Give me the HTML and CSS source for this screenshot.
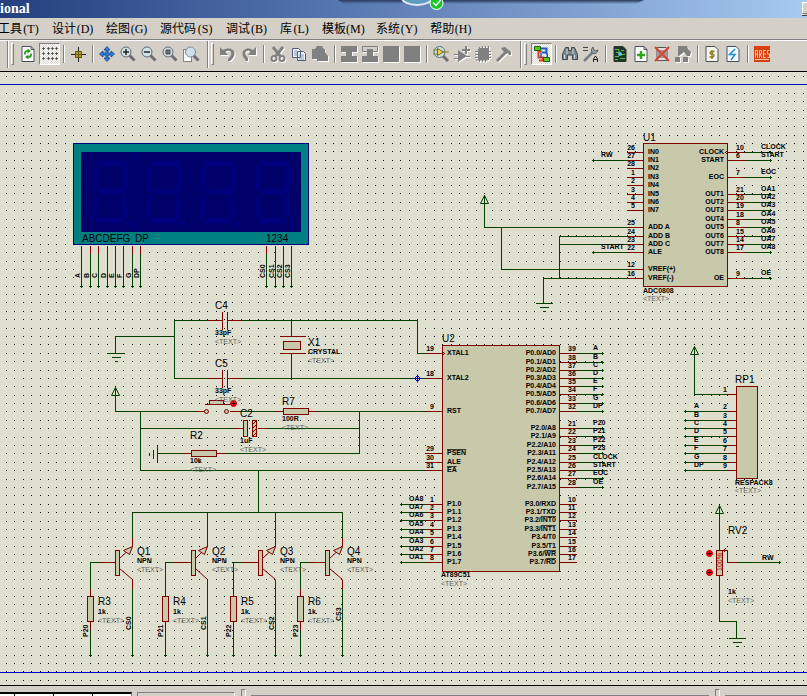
FILE: index.html
```html
<!DOCTYPE html>
<html lang="zh-CN">
<head>
<meta charset="utf-8">
<title>ISIS Professional</title>
<link rel="stylesheet" href="styles.css">
</head>
<body>
<header class="titlebar">
  <span class="titlebar-text">ional</span>
  <svg class="badge" width="320" height="12" viewBox="336 0 320 12" aria-hidden="true">
    <defs>
      <linearGradient id="shade" x1="0" x2="0" y1="0" y2="1"><stop offset="0" stop-color="#2a3a5a"/><stop offset="1" stop-color="#2a3a5a" stop-opacity="0"/></linearGradient>
    </defs>
    <path d="M338 0H644L636 4H344Z" fill="url(#shade)"/>
    <ellipse cx="417" cy="-2" rx="15" ry="7" fill="#5c9cc0" stroke="#e4e8ec" stroke-width="2"/>
    <circle cx="436.500" cy="3" r="6.500" fill="#18c828" stroke="#fff"/>
    <path d="M433 2.500l3 3 5-6" fill="none" stroke="#fff" stroke-width="1.500"/>
  </svg>
  <button class="minimise" aria-label="Minimise">_</button>
</header>

<nav class="menubar">
  <button>工具<span>(T)</span></button>
  <button>设计<span>(D)</span></button>
  <button>绘图<span>(G)</span></button>
  <button>源代码<span>(S)</span></button>
  <button>调试<span>(B)</span></button>
  <button>库<span>(L)</span></button>
  <button>模板<span>(M)</span></button>
  <button>系统<span>(Y)</span></button>
  <button>帮助<span>(H)</span></button>
</nav>

<div class="toolbar">
  <div class="group">
    <i class="grip"></i>
    <button aria-label="Redraw"><svg viewBox="0 0 16 16"><path d="M2 .5h9l3 3v12h-12z" fill="#fff" stroke="#4a5058"/><path d="M11 .5v3h3" fill="none" stroke="#4a5058"/><path d="M5 8.500V7q0-2 3-2" fill="none" stroke="#2c9a1c" stroke-width="1.800"/><path d="M7.500 2.500l3.500 2.500-3.500 2.500zM8.500 8.500v5L5 11z" fill="#2c9a1c"/><path d="M11 7.500V9q0 2-3 2" fill="none" stroke="#2c9a1c" stroke-width="1.800"/></svg></button>
    <button class="pressed" aria-label="Grid"><svg viewBox="0 0 16 16"><path d="M0 2.500h3M5 2.500h3M9 2.500h3M13 2.500h3M0 7.500h3M5 7.500h3M9 7.500h3M13 7.500h3M0 12.500h3M5 12.500h3M9 12.500h3M13 12.500h3M1.500 1v3M6.500 1v3M10.500 1v3M14.500 1v3M1.500 6v3M6.500 6v3M10.500 6v3M14.500 6v3M1.500 11v3M6.500 11v3M10.500 11v3M14.500 11v3" stroke="#333" stroke-width=".7"/></svg></button>
    <i class="sep"></i>
    <button aria-label="Origin"><svg viewBox="0 0 16 16"><path d="M8.500 1v15M1 8.500h15" stroke="#222"/><path d="M5.500 5.500h6v6h-6z" fill="#b8a818" stroke="#5a5210"/><path d="M8.500 5v7M5 8.500h7" stroke="#665c10"/></svg></button>
    <i class="sep"></i>
    <button aria-label="Pan"><svg viewBox="0 0 16 16"><path d="M8 .5l3 3.500H9v3h3V5l3.500 3-3.500 3V9H9v3h2l-3 3.500L5 12h2V9H4v2L.5 8 4 5v2h3V4H5z" fill="#2c84e0" stroke="#103c80" stroke-width=".8"/></svg></button>
    <button aria-label="Zoom in"><svg viewBox="0 0 16 16"><path d="M9.500 9.500l5 5" stroke="#6e6e6e" stroke-width="3"/><circle cx="6" cy="6" r="5" fill="#cfe0e6" stroke="#5c6c74"/><path d="M3 6h6M6 3v6" stroke="#222" stroke-width="1.500"/></svg></button>
    <button aria-label="Zoom out"><svg viewBox="0 0 16 16"><path d="M9.500 9.500l5 5" stroke="#6e6e6e" stroke-width="3"/><circle cx="6" cy="6" r="5" fill="#cfe0e6" stroke="#5c6c74"/><path d="M3 6h6" stroke="#222" stroke-width="1.500"/></svg></button>
    <button aria-label="Zoom all"><svg viewBox="0 0 16 16"><path d="M9.500 9.500l5 5" stroke="#6e6e6e" stroke-width="3"/><circle cx="6" cy="6" r="5" fill="#cfe0e6" stroke="#5c6c74"/><path d="M4 4h4v4H4z" fill="#777" stroke="#444"/></svg></button>
    <button aria-label="Zoom area"><svg viewBox="0 0 16 16"><path d="M.5 3.500h8v12h-8z" fill="#fff" stroke="#222" stroke-dasharray="1 1"/><path d="M10.500 9.500l5 5" stroke="#6e6e6e" stroke-width="3"/><circle cx="7.500" cy="6" r="5" fill="#cfe0e6" stroke="#7c8c94"/></svg></button>
  </div>
  <div class="group">
    <i class="grip"></i>
    <button class="off" aria-label="Undo"><svg viewBox="0 0 16 16"><path d="M0 1v8h8L5.500 6Q8 4 10.500 5.500 13 8 8 13v2h2Q16 10 14 5 10 0 3 4z" fill="#808080"/></svg></button>
    <button class="off" aria-label="Redo"><svg viewBox="0 0 16 16"><path d="M15 1v8H7l2.500-3Q8 4 5 5.500 3 8 7 12v3H5Q0 10 2 5 6 0 12 4z" fill="#808080"/></svg></button>
    <i class="sep"></i>
    <button class="off" aria-label="Cut"><svg viewBox="0 0 16 16"><path d="M3 1l8 10M13 1L5 11" stroke="#808080" stroke-width="3"/><circle cx="4" cy="12.500" r="2.500" fill="none" stroke="#808080" stroke-width="2"/><circle cx="12" cy="12.500" r="2.500" fill="none" stroke="#808080" stroke-width="2"/></svg></button>
    <button aria-label="Copy"><svg viewBox="0 0 16 16"><path d="M1.500 2.500h6l2 2v7h-8zM6.500 5.500h6l2 2v7h-8z" fill="#eef4fa" stroke="#4c5c74"/><path d="M3 5h3M3 7h3M3 9h3M8 9h5M8 11h5M8 13h5" stroke="#6a86a8" stroke-width=".8"/></svg></button>
    <button class="off" aria-label="Paste"><svg viewBox="0 0 16 16"><path d="M0 3h3l2-3h5l2 3h1v3l3 4v5H5v-2H0z" fill="#808080"/></svg></button>
    <i class="sep"></i>
    <button class="off" aria-label="Block copy"><svg viewBox="0 0 16 16"><path d="M0 0h16v6h-5v4h5v6H0v-6h5V6H0z" fill="#808080"/></svg></button>
    <button class="off" aria-label="Block move"><svg viewBox="0 0 16 16"><path d="M.5.5h15v5H.5z" fill="#d4d0c8" stroke="#808080"/><path d="M5 3h6v7h5v6H0v-6h5z" fill="#808080"/></svg></button>
    <button class="off" aria-label="Block rotate"><svg viewBox="0 0 16 16"><path d="M0 0h16v16H0z" fill="#808080"/></svg></button>
    <button class="off" aria-label="Block delete"><svg viewBox="0 0 16 16"><path d="M0 0h16v16H0z" fill="#808080"/></svg></button>
    <i class="sep"></i>
    <button aria-label="Pick parts"><svg viewBox="0 0 16 16"><path d="M10 10l5 5" stroke="#6e6e6e" stroke-width="3"/><circle cx="6.500" cy="6" r="5.500" fill="#cfe0e0" stroke="#5c6c74"/><path d="M4.500 2.500L10.500 6l-6 3.500z" fill="#f0dc50" stroke="#6a6414"/><path d="M0 4h4M0 8h4M10 6h6" stroke="#8a8220"/></svg></button>
    <button class="off" aria-label="Make device"><svg viewBox="0 0 16 16"><path d="M4 4l9 6-9 6v-3H0v-1h4V9H0V8h4zM12 10h4v1h-4zM8 3h3V0h2v3h3v2h-3v3h-2V5H8z" fill="#808080"/></svg></button>
    <button class="off" aria-label="Packaging tool"><svg viewBox="0 0 16 16"><path d="M3 3l2-1h9v10l-2 2H3z" fill="#808080"/><path d="M4.500 1v15M7.500 0v16M10.500 0v16M13.500 0v14M0 5.500h16M0 8.500h16M0 11.500h16M1 14h12" stroke="#808080"/></svg></button>
    <button class="off" aria-label="Decompose"><svg viewBox="0 0 16 16"><path d="M1 15L10 6" stroke="#808080" stroke-width="3"/><path d="M5 2l4-1 6 5v3h-2l-1-2-2 1-3-3z" fill="#808080"/></svg></button>
  </div>
  <div class="group">
    <i class="grip"></i>
    <button class="pressed" aria-label="Wire autorouter"><svg viewBox="0 0 16 16"><path d="M7 2.500h5.500v4H8" fill="none" stroke="#1c58c8" stroke-width="2"/><path d="M8 5.500H4.500v6H9v3H5" fill="none" stroke="#e03c1c" stroke-width="2"/><path d="M12 7q2 1 1 5M7 7v5" fill="none" stroke="#1c58c8" stroke-width="1.500"/><path d="M.5.5h6v4h-6zM9.500 11.500h6v4h-6z" fill="#58c828" stroke="#226010"/></svg></button>
    <i class="sep"></i>
    <button aria-label="Search"><svg viewBox="0 0 16 16"><path d="M3.500 1.500h3v3h3v-3h3l3 7v5h-5V9h-5v4.500h-5v-5z" fill="#7c8890" stroke="#3c444c"/><path d="M2.500 9v4M12.500 9v4M5 3v5M11 3v5" stroke="#cfdde4"/></svg></button>
    <button aria-label="Property assignment"><svg viewBox="0 0 16 16"><path d="M0 1.500h5M0 4.500h5" stroke="#444"/><path d="M1 15l9-9" stroke="#767c80" stroke-width="2.500"/><path d="M10 1q-3 2-1 6 5 2 6-3l-3 1-1-1z" fill="#9aa2a8" stroke="#565e64"/><path d="M10.500 16v-3l2-3 2 3v3M11 13.500h3" fill="none" stroke="#222"/></svg></button>
    <i class="sep"></i>
    <button aria-label="Design explorer"><svg viewBox="0 0 16 16"><path d="M2 .5h9l3 3v12H2z" fill="#203428" stroke="#333"/><path d="M3 3.500h4v3H4M3 10.500h4M9 4.500h3M9 8.500h4M8 12.500h5M3 13.500h3" fill="none" stroke="#50c040"/><circle cx="8" cy="8" r="2" fill="#54c8e0"/></svg></button>
    <button aria-label="New sheet"><svg viewBox="0 0 16 16"><path d="M2 .5h9l3 3v12H2z" fill="#fff" stroke="#4a5058"/><path d="M11 .5v3h3" fill="none" stroke="#4a5058"/><path d="M8 5v8M4 9h8" stroke="#2ca41c" stroke-width="2.500"/></svg></button>
    <button aria-label="Remove sheet"><svg viewBox="0 0 16 16"><path d="M3 1.500h9l1 2v11H3z" fill="#e0e0e0" stroke="#555"/><path d="M5 5h6v6H5z" fill="none" stroke="#555"/><path d="M1 1l14 14M15 1L1 15" stroke="#d8402c" stroke-width="2"/></svg></button>
    <button class="off" aria-label="Exit to parent"><svg viewBox="0 0 16 16"><path d="M3 0h9l1 3 3 3-1 4h-3l-3-4-5 4H3zM0 11h5v5H0zM8 11h5v5H8z" fill="#808080"/></svg></button>
    <i class="sep"></i>
    <button aria-label="Bill of materials"><svg viewBox="0 0 16 16"><path d="M2 .5h9l3 3v12H2z" fill="#f4f4ec" stroke="#4a5058"/><path d="M10.500 5.500H7q-2 1 0 2.500h2q2 1 0 3H5.500M8 4v9" fill="none" stroke="#887c10" stroke-width="1.300"/></svg></button>
    <button aria-label="Electrical check"><svg viewBox="0 0 16 16"><path d="M2 .5h9l3 3v12H2z" fill="#f4f8fc" stroke="#4a5058"/><path d="M10 3L4.500 8.500h5.500L6 14" fill="none" stroke="#1c8cdc" stroke-width="1.500"/></svg></button>
    <i class="sep"></i>
    <button aria-label="ARES"><svg viewBox="0 0 16 16"><path d="M0 0h16v16H0z" fill="#d84010"/><path d="M1.500 12V4.500h2V12M1.500 8h2M5.500 12V4.500h2V8H6l2 4M12 4.500H9.500v7H12M9.500 8H12M15.500 4.500h-2V8h2v3.500h-2M1 13.500h14" fill="none" stroke="#ffe4d8" stroke-width=".8"/></svg></button>
  </div>
</div>

<main class="sheet">
  <svg id="schematic" role="img" aria-label="Schematic"></svg>
</main>

<footer class="statusbar">
  <div class="transport"><i></i><i></i><i></i></div>
  <div class="messages"></div>
  <i class="grip"></i>
  <div class="status"></div>
  <i class="grip"></i>
  <div class="coords"></div>
</footer>
<script src="schematic.js"></script>
</body>
</html>
```
FILE: styles.css
```css
* { box-sizing: border-box; }

body {
  margin: 0;
  height: 100vh;
  display: flex;
  flex-direction: column;
  overflow: hidden;
  background: #d4d0c8;
  font: 12px "Liberation Serif", "Noto Sans CJK SC", serif;
  color: #000;
}

button {
  margin: 0;
  padding: 0;
  border: 0;
  background: none;
  font: inherit;
  color: inherit;
}

/* Title bar */
.titlebar {
  position: relative;
  flex: none;
  display: flex;
  justify-content: space-between;
  height: 18px;
  overflow: hidden;
  background: linear-gradient(90deg, #24407e, #4a6aa6 33%, #7898ca 66%, #a6caf0);
}
.titlebar-text {
  color: #fff;
  font: bold 14px/18px "Liberation Serif", serif;
}
.badge { position: absolute; left: 336px; top: 0; }
.minimise {
  width: 5px;
  height: 14px;
  margin-top: 2px;
  overflow: hidden;
  background: #d4d0c8;
  border: solid #404040;
  border-width: 0 0 1px;
  box-shadow: inset 1px 1px #fff;
  font: bold 10px/10px "Liberation Sans", sans-serif;
}

/* Menu */
.menubar {
  flex: none;
  display: flex;
  gap: 12px;
  height: 21px;
  margin-left: -2px;
  line-height: 22px;
}
.menubar button { white-space: nowrap; }
.menubar span { display: inline-block; width: 18px; text-align: center; }

/* Toolbar */
.toolbar {
  flex: none;
  display: flex;
  height: 33px;
  padding: 1px 0 0 7px;
  border-top: 1px solid #808080;
  border-bottom: 1px solid #000;
  box-shadow: inset 0 1px #fff;
}
.group {
  display: flex;
  height: 27px;
  padding: 2px 5px 0 3px;
  border-left: 1px solid #808080;
  box-shadow: inset 1px 0 #fff;
}
.grip {
  width: 3px;
  height: 22px;
  margin-right: 4px;
  border: 1px solid;
  border-color: #fff #808080 #808080 #fff;
}
.toolbar button {
  width: 21px;
  height: 22px;
  padding-left: 2px;
  display: grid;
  align-items: center;
  justify-items: start;
}
.toolbar svg { width: 16px; height: 16px; overflow: visible; }
.off svg { filter: drop-shadow(1px 1px 0 #fff); }
.toolbar .pressed {
  background: repeating-conic-gradient(#fff 0 25%, #dcd8d0 0 50%) 0 0 / 2px 2px;
  border: 1px solid;
  border-color: #808080 #fff #fff #808080;
}
.sep {
  width: 2px;
  height: 18px;
  margin: 2px 3px;
  border-left: 1px solid #808080;
  border-right: 1px solid #fff;
}

/* Drawing area */
.sheet {
  flex: 1;
  min-height: 0;
  background: #dedfcf;
  border-bottom: 1px solid #000;
}
#schematic {
  display: block;
  width: 100%;
  height: 100%;
  font-family: "Liberation Sans", sans-serif;
}
.grid { stroke: #000; shape-rendering: crispEdges; }
.frame { stroke: #0000c8; shape-rendering: crispEdges; }
.wire, .pin { fill: none; stroke: #004000; shape-rendering: crispEdges; }
.pin { stroke: #800000; }
.body { fill: #c8c8aa; stroke: #800000; shape-rendering: crispEdges; }
.smooth { shape-rendering: auto; }
.arrow { fill: none; stroke: #004000; }
.node { fill: none; stroke: #0000c0; }
.mark { fill: #f01010; stroke: #c00000; }
.cross { stroke: #200000; fill: none; }
.panel { fill: #008080; stroke: #000080; }
.glass { fill: #000068; }
.segment { fill: #00007c; }
.divider { stroke: #00007c; }
.label { font-size: 7px; font-weight: bold; }
.name { font-size: 10px; }
.face { font-size: 10px; }
.placeholder { font-size: 7px; fill: #606060; }
.percent { font-size: 7px; fill: #c00000; }
.end { text-anchor: end; }
.over { text-decoration: overline; }

/* Status bar */
.statusbar {
  flex: none;
  display: flex;
  height: 10px;
  padding-top: 3px;
  overflow: hidden;
}
.statusbar > div { margin-top: 3px; }
.transport {
  width: 132px;
  display: flex;
  gap: 38px;
  padding-left: 14px;
  background: #fff;
  border-top: 2px solid #000;
  border-right: 1px solid #808080;
}
.transport i { width: 1px; background: #000; }
.messages {
  width: 98px;
  margin-left: 5px;
  border: solid #808080;
  border-width: 1px 0 0 1px;
  border-right: 1px solid #fff;
}
.statusbar .grip { width: 5px; margin: 0 5px 0 6px; border-color: #808080; border-right-color: #fff; }
.statusbar .status, .statusbar .coords { height: 4px; margin-top: 6px; border-top: 1px solid #808080; }
.status { flex: 458; }
.coords { flex: 82; }
```
FILE: schematic.js
```js
const NS = 'http://www.w3.org/2000/svg';
const svg = document.getElementById('schematic');

function el(parent, tag, cls, attrs, content) {
  const node = document.createElementNS(NS, tag);
  if (cls) node.setAttribute('class', cls);
  for (const key in attrs) node.setAttribute(key, attrs[key]);
  if (content) node.textContent = content;
  parent.appendChild(node);
  return node;
}

// Strokes sit on pixel centres, text on whole pixels.
const ink = el(svg, 'g', '', { transform: 'translate(0.5 -71.5)' });
const words = el(svg, 'g', '', { transform: 'translate(0 -72)' });

const path = (cls, d) => el(ink, 'path', cls, { d });
const box = (cls, x1, y1, x2, y2) =>
  el(ink, 'rect', cls, { x: x1, y: y1, width: x2 - x1, height: y2 - y1 });
const wire = d => path('wire', d);
const pin = d => path('pin', d);
const end = (x, y) => wire(`M${x - 1.5} ${y}h3M${x} ${y - 1.5}v3`);

// A leading or embedded ~XX~ draws XX with an overline.
function text(cls, x, y, str, turned) {
  const attrs = turned ? { transform: `translate(${x} ${y}) rotate(-90)` } : { x, y };
  const t = el(words, 'text', cls, attrs);
  str.split('~').forEach((part, i) => {
    if (part) el(t, 'tspan', i % 2 ? 'over' : '', {}, part);
  });
}
const part = (x, y, name, value, vx, vy) => {
  text('name', x, y, name);
  text('label', vx, vy, value);
  text('placeholder', vx, vy + 9, '<TEXT>');
};

// Dot grid
let dots = '';
for (let r = 0; r < 73; r++) {
  for (let c = 0; c < 240; c++) {
    dots += `M${Math.round(6 + c * 8.387) - 0.5} ${Math.round(76 + r * 8.387)}h1`;
  }
}
path('grid', dots);
[84, 672].forEach(y => el(ink, 'line', 'frame', { x1: -1, x2: '100%', y1: y, y2: y }));

// Terminals
const power = (x, y) => path('arrow', `M${x} ${y}l-4 8h8zM${x} ${y}v9`);
const ground = (x, y) => wire(`M${x - 8} ${y}h17M${x - 4} ${y + 4}h9M${x - 1} ${y + 8}h3`);

// Seven-segment display
box('panel', 73, 143, 308, 244);
el(ink, 'rect', 'glass', { x: 80.5, y: 151.5, width: 220, height: 80 });
[136, 191, 245].forEach(x => path('divider', `M${x} 152v79`));
[92, 146, 200, 255].forEach(x => {
  const seg = pts => path('segment smooth', `M${pts}Z`);
  seg(`${x + 5} 160h27l3 3l-4 3h-23l-5-3`);
  seg(`${x + 1} 164l5 3l-1 21l-3 3l-2-3`);
  seg(`${x + 36} 164l-5 3l-1 21l3 3l2-3`);
  seg(`${x + 4} 191l4-3h22l3 3l-3 3h-22`);
  seg(`${x + 2} 193l3 3l-1 20l-5 3`);
  seg(`${x + 33} 193l-3 3l-1 20l5 3l1-3`);
  seg(`${x + 2} 221l4-4h22l4 4l-4 2h-24`);
  el(ink, 'circle', 'segment', { cx: x + 36, cy: 223, r: 2.5 });
});
text('face', 82, 242, 'ABCDEFG');
text('face', 135, 242, 'DP');
text('face', 266, 242, '1234');
[[81, 'A'], [90, 'B'], [98, 'C'], [107, 'D'], [115, 'E'], [123, 'F'], [132, 'G'], [140, 'DP'],
 [266, 'CS0'], [275, 'CS1'], [283, 'CS2'], [291, 'CS3']].forEach(([x, net]) => {
  pin(`M${x} 245V253`);
  wire(`M${x} 253V286`);
  end(x, 286);
  text('label', x - 1, 278, net, true);
});

// Pins of a chip: [y, number, inner label, net]
function leftPins(edge, reach, pins) {
  pins.forEach(([y, num, inner, net]) => {
    pin(`M${edge - 17} ${y}H${edge}`);
    text('label end', edge - 8, y - 2, num);
    if (inner) text('label', edge + 5, y + 2, inner);
    if (net) {
      wire(`M${reach} ${y}H${edge - 17}`);
      end(reach, y);
      text('label', reach + 8, y - 3, net);
    }
  });
}
function rightPins(edge, reach, pins) {
  pins.forEach(([y, num, inner, net]) => {
    pin(`M${edge} ${y}H${edge + 17}`);
    text('label', edge + 9, y - 2, num);
    text('label end', edge - 3, y + 2, inner);
    if (net) {
      wire(`M${edge + 17} ${y}H${reach}`);
      end(reach, y);
      text('label', reach - 9, y - 3, net);
    }
  });
}

// U1
box('body', 643, 143, 727, 286);
text('name', 643, 141, 'U1');
text('label', 643, 293, 'ADC0808');
text('placeholder', 643, 301, '<TEXT>');
leftPins(643, 593, [
  [152, '26', 'IN0'], [160, '27', 'IN1', 'RW'], [168, '28', 'IN2'], [177, '1', 'IN3'],
  [185, '2', 'IN4'], [194, '3', 'IN5'], [202, '4', 'IN6'], [210, '5', 'IN7'],
  [227, '25', 'ADD A'], [236, '24', 'ADD B'], [244, '23', 'ADD C'], [252, '22', 'ALE', 'START'],
  [269, '12', 'VREF(+)'], [278, '16', 'VREF(-)']
]);
rightPins(727, 770, [
  [152, '10', 'CLOCK', 'CLOCK'], [160, '6', 'START', 'START'], [177, '7', 'EOC', 'EOC'],
  [194, '21', 'OUT1', 'OA1'], [202, '20', 'OUT2', 'OA2'], [210, '19', 'OUT3', 'OA3'],
  [219, '18', 'OUT4', 'OA4'], [227, '8', 'OUT5', 'OA5'], [236, '15', 'OUT6', 'OA6'],
  [244, '14', 'OUT7', 'OA7'], [252, '17', 'OUT8', 'OA8'], [278, '9', 'OE', 'OE']
]);
pin('M727 150l-2 2l2 2');
power(484, 195);
wire('M484 203V227H626M501 227V269H626M626 236H559V278M559 244H626M626 278H543V303');
ground(543, 303);

// U2
box('body', 442, 345, 559, 571);
text('name', 442, 342, 'U2');
text('label', 441, 577, 'AT89C51');
text('placeholder', 441, 586, '<TEXT>');
leftPins(442, 401, [
  [353, '19', 'XTAL1'], [378, '18', 'XTAL2'], [411, '9', 'RST'],
  [453, '29', '~PSEN~'], [462, '30', 'ALE'], [470, '31', '~EA~'],
  [504, '1', 'P1.0', 'OA8'], [512, '2', 'P1.1', 'OA7'], [520, '3', 'P1.2', 'OA6'],
  [529, '4', 'P1.3', 'OA5'], [537, '5', 'P1.4', 'OA4'], [546, '6', 'P1.5', 'OA3'],
  [554, '7', 'P1.6', 'OA2'], [562, '8', 'P1.7', 'OA1']
]);
rightPins(559, 602, [
  [353, '39', 'P0.0/AD0', 'A'], [362, '38', 'P0.1/AD1', 'B'], [370, '37', 'P0.2/AD2', 'C'],
  [378, '36', 'P0.3/AD3', 'D'], [386, '35', 'P0.4/AD4', 'E'], [394, '34', 'P0.5/AD5', 'F'],
  [403, '33', 'P0.6/AD6', 'G'], [411, '32', 'P0.7/AD7', 'DP'],
  [428, '21', 'P2.0/A8', 'P20'], [436, '22', 'P2.1/A9', 'P21'], [445, '23', 'P2.2/A10', 'P22'],
  [453, '24', 'P2.3/A11', 'P23'], [462, '25', 'P2.4/A12', 'CLOCK'], [470, '26', 'P2.5/A13', 'START'],
  [478, '27', 'P2.6/A14', 'EOC'], [487, '28', 'P2.7/A15', 'OE'],
  [504, '10', 'P3.0/RXD'], [512, '11', 'P3.1/TXD'], [520, '12', 'P3.2/~INT0~'],
  [529, '13', 'P3.3/~INT1~'], [537, '14', 'P3.4/T0'], [546, '15', 'P3.5/T1'],
  [554, '16', 'P3.6/~WR~'], [562, '17', 'P3.7/~RD~']
]);
pin('M442 351l2 2l-2 2');

// Oscillator
wire('M207 320H174V378H207M174 336H115V353M241 320H417V353H425M241 378H425M291 319V328M291 361V379');
ground(115, 353);
[320, 378].forEach(y => pin(`M207 ${y}H222M222 ${y - 9}v18M227 ${y - 9}v18M227 ${y}H241`));
part(215, 309, 'C4', '33pF', 215, 335);
part(215, 367, 'C5', '33pF', 215, 393);
pin('M291 328V336M279 336H305M279 353H305M291 353V361');
box('body', 283, 341, 300, 349);
part(308, 346, 'X1', 'CRYSTAL', 308, 354);
path('node', 'M417 375l3 3l-3 3l-3-3zM413 378h8M417 374v8');

// Reset
power(115, 387);
wire('M115 395V411H195M238 411H275M317 411H425M140 411V470H425M140 428H233M266 428H359M359 411V453H225M157 453H182');
wire('M157 445V462M153 449V458M149 452V455');
pin('M195 411H204M229 411H238M204 404H229M275 411H283M308 411H317M233 428H243M257 428H266M182 453H191M216 453H225');
box('body', 209, 400, 223, 404);
[206, 226].forEach(cx => el(ink, 'circle', 'body smooth', { cx, cy: 411, r: 2 }));
box('body', 283, 408, 308, 414);
box('body', 191, 450, 216, 456);
box('body', 243, 420, 247, 436);
box('body', 252, 420, 256, 436);
path('pin smooth', 'M252 424l4-4M252 428l4-4M252 432l4-4M252 436l4-4');
function mark(x, y) {
  el(ink, 'circle', 'mark', { cx: x, cy: y, r: 3 });
  path('cross', `M${x - 2} ${y}h4M${x} ${y - 2}v4`);
}
mark(233, 403);
part(282, 405, 'R7', '100R', 282, 421);
part(240, 417, 'C2', '1uF', 240, 443);
part(190, 439, 'R2', '10k', 190, 463);

// Digit drivers: [resistor x, base bar x, collector x, names, nets, bottom of CS label]
wire('M258 470V512M132 512H342');
[[90, 115, 132, 'Q1', 'R3', 'P20', 'CS0', 630], [165, 191, 207, 'Q2', 'R4', 'P21', 'CS1', 630],
 [233, 258, 275, 'Q3', 'R5', 'P22', 'CS2', 630], [300, 325, 342, 'Q4', 'R6', 'P23', 'CS3', 621]
].forEach(([r, b, c, q, res, pnet, cnet, cy]) => {
  wire(`M${c} 512V537M${c} 588V655M${r + 8} 562H${r}V588M${r} 630V655`);
  pin(`M${c} 537V546M${c} 579V588M${r + 8} 562H${b}M${r} 588V596M${r} 621V630`);
  path('pin smooth', `M${b + 4} 558L${c} 546M${b + 4} 568L${c} 579`);
  path('body smooth', `M${c} 546l-9 4l6 4z`);
  box('body', b, 550, b + 4, 575);
  box('body', r - 3, 596, r + 3, 621);
  end(c, 655);
  end(r, 655);
  part(c + 5, 555, q, 'NPN', c + 5, 563);
  part(r + 8, 605, res, '1k', r + 8, 614);
  text('label', r - 2, 637, pnet, true);
  text('label', c - 1, cy, cnet, true);
});

// Resistor pack
power(694, 346);
wire('M694 354V394H727');
box('body', 736, 386, 757, 478);
text('name', 735, 383, 'RP1');
text('label', 735, 485, 'RESPACK8');
text('placeholder', 735, 493, '<TEXT>');
['', 'A', 'B', 'C', 'D', 'E', 'F', 'G', 'DP'].forEach((net, i) => {
  const y = [394, 411, 420, 428, 436, 445, 453, 462, 470][i];
  pin(`M727 ${y}H736`);
  text('label end', 727, y - 2, String(i + 1));
  if (net) {
    wire(`M685 ${y}H727`);
    end(685, y);
    text('label', 694, y - 3, net);
  }
});

// Potentiometer
power(719, 505);
wire('M719 513V537M719 588V621H736V638M736 562H779');
ground(736, 638);
end(779, 562);
pin('M719 537V550M719 575V588M722 550H727V562H736M725 548l-2 2l2 2');
box('body', 716, 550, 722, 575);
text('percent', 722, 571, '100%', true);
mark(709, 553);
mark(709, 572);
part(728, 534, 'RV2', '1k', 728, 594);
text('label', 762, 560, 'RW');
```
